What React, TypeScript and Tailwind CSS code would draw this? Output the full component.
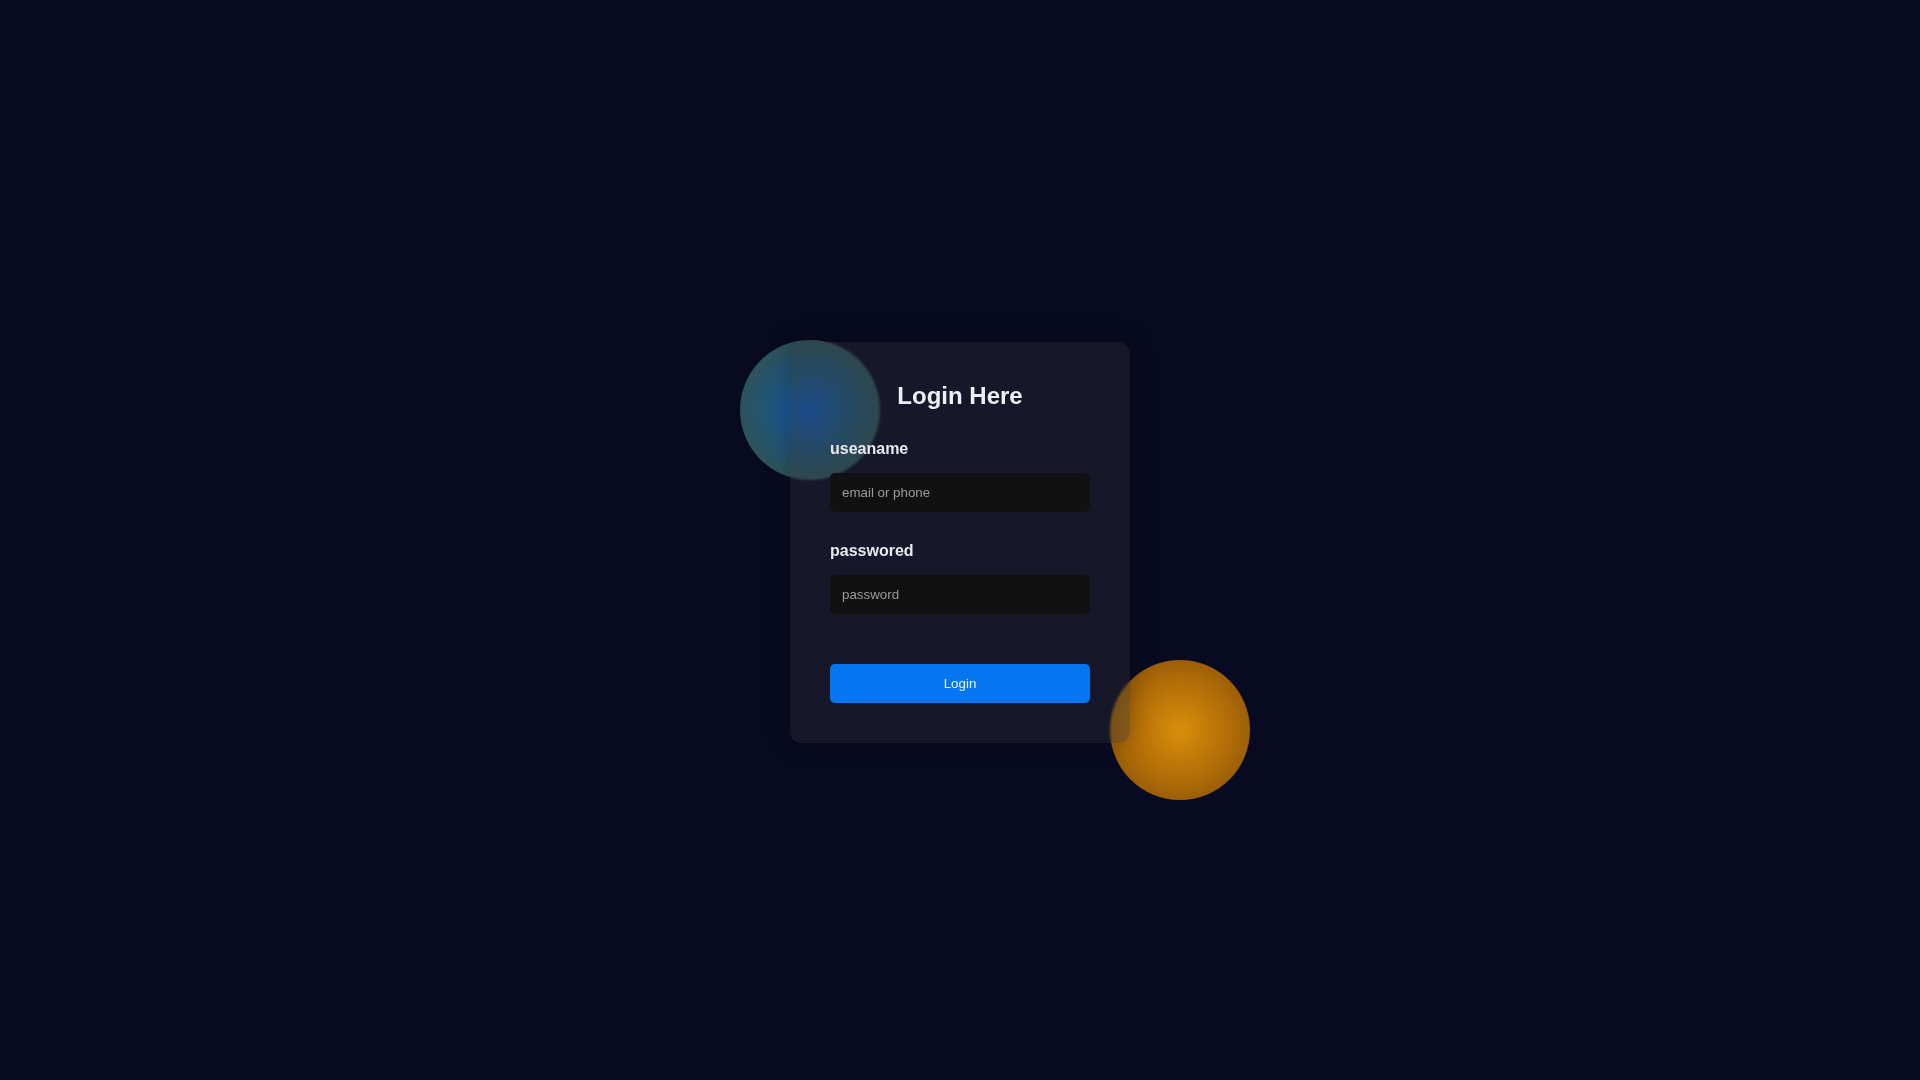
import React from 'react';

const LoginCard: React.FC = () => {
    return (
        <div className="relative">
            {/* glowing shapes behind the card */}
            <div className="absolute -left-[50px] -top-[2px] w-[140px] h-[140px] rounded-full bg-[radial-gradient(circle,#0f57b8_0%,#1e5680_35%,#2b5360_65%,#31514a_100%)]"></div>
            <div className="absolute left-[320px] top-[318px] w-[140px] h-[140px] rounded-full bg-[radial-gradient(circle,#d98e0a_0%,#ad6a08_55%,#7a4708_100%)]"></div>

            <form
                onSubmit={e => e.preventDefault()}
                className="relative w-[340px] px-10 pt-10 pb-10 rounded-xl bg-[rgba(50,52,58,0.35)] backdrop-blur-[1px] shadow-[0_0_24px_rgba(0,0,0,0.25)]"
            >
                <h3 className="text-center text-[24px] leading-[28px] font-bold text-[#eeeef3]">Login Here</h3>

                <label htmlFor="username" className="block mt-[30px] text-[16px] leading-[18px] font-bold text-[#e8e8ee]">
                    useaname
                </label>
                <input
                    id="username"
                    type="text"
                    placeholder="email or phone"
                    className="block w-full h-[39px] mt-[15px] px-3 rounded-[5px] bg-[#111112] text-[13.333px] text-[#e5e5e5] placeholder:text-[#9a9a9a] outline-none"
                />

                <label htmlFor="password" className="block mt-[30px] text-[16px] leading-[18px] font-bold text-[#e8e8ee]">
                    passwored
                </label>
                <input
                    id="password"
                    type="password"
                    placeholder="password"
                    className="block w-full h-[39px] mt-[15px] px-3 rounded-[5px] bg-[#111112] text-[13.333px] text-[#e5e5e5] placeholder:text-[#9a9a9a] outline-none"
                />

                <button
                    type="submit"
                    className="block w-full h-[39px] mt-[50px] rounded-[5px] bg-[#0575f0] text-[13.333px] text-[#eef3fb] cursor-pointer"
                >
                    Login
                </button>
            </form>
        </div>
    );
};

export default function App() {
    return (
        <div className="min-h-screen w-full pt-[5px] flex items-center justify-center bg-[#080a21] font-['Liberation_Sans',Arial,sans-serif]">
            <LoginCard />
        </div>
    );
}
